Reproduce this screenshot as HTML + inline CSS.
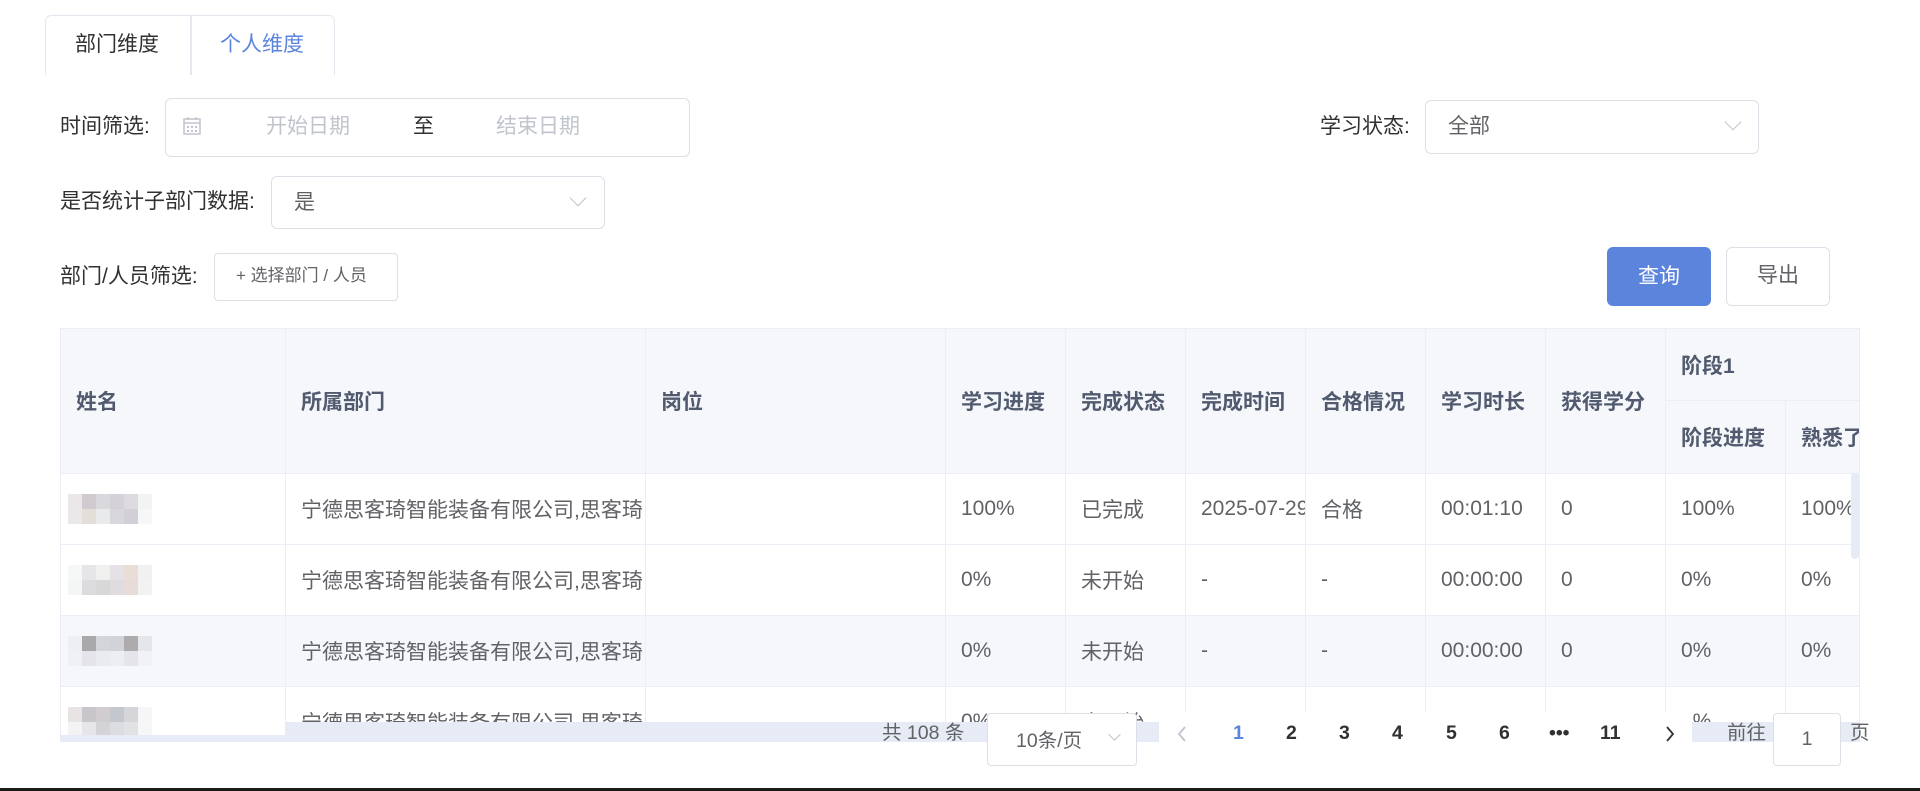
<!DOCTYPE html>
<html><head><meta charset="utf-8"><style>
*{box-sizing:border-box;margin:0;padding:0}
body{width:1920px;height:791px;background:#fff;position:relative;overflow:hidden;font-family:"Liberation Sans","Noto Sans CJK SC",sans-serif;font-size:21px;color:#606266}
.a{position:absolute}
.lbl{color:#303133;font-size:21px;line-height:30px}
.box{position:absolute;border:1.5px solid #dcdfe6;border-radius:6px;background:#fff}
.chev{position:absolute;width:12px;height:12px;border-right:1.5px solid #c0c4cc;border-bottom:1.5px solid #c0c4cc;transform:rotate(45deg)}
table{border-collapse:collapse;table-layout:fixed;position:absolute;left:0;top:0}
td,th{border:1px solid #ebeef5;padding:0 15px;text-align:left;white-space:nowrap;overflow:hidden;font-size:21px}
th{background:#f5f7fa;color:#515a6e;font-weight:bold}
td{height:71px;color:#606266}
tr.st td{background:#f5f7fa}
.nm{display:grid;grid-template-columns:repeat(6,14px);grid-template-rows:repeat(2,15px);width:84px;margin-left:-8px}
.nm i{display:block}
.pg{position:absolute;top:718px;font-size:19.5px;font-weight:bold;color:#303133;line-height:30px}
</style></head><body>
<div class="a" style="left:45px;top:15px;width:290px;height:60px;border:1.5px solid #e4e7ed;border-bottom:none;border-radius:6px 6px 0 0"></div>
<div class="a" style="left:190px;top:15px;width:1.5px;height:60px;background:#e4e7ed"></div>
<div class="a lbl" style="left:75px;top:30px">部门维度</div>
<div class="a lbl" style="left:220px;top:30px;color:#5b84dc">个人维度</div>

<div class="a lbl" style="left:60px;top:112px">时间筛选:</div>
<div class="box" style="left:165px;top:98px;width:525px;height:59px"></div>
<svg class="a" style="left:182px;top:116px" width="20" height="20" viewBox="0 0 20 20"><rect x="2" y="3" width="16" height="15" fill="none" stroke="#c0c4cc" stroke-width="1.5"/><line x1="2" y1="7" x2="18" y2="7" stroke="#c0c4cc" stroke-width="1.5"/><line x1="6" y1="1" x2="6" y2="4" stroke="#c0c4cc" stroke-width="1.5"/><line x1="14" y1="1" x2="14" y2="4" stroke="#c0c4cc" stroke-width="1.5"/><g fill="#c0c4cc"><rect x="5" y="10" width="2" height="2"/><rect x="9" y="10" width="2" height="2"/><rect x="13" y="10" width="2" height="2"/><rect x="5" y="14" width="2" height="2"/><rect x="9" y="14" width="2" height="2"/><rect x="13" y="14" width="2" height="2"/></g></svg>
<div class="a" style="left:266px;top:112px;color:#c0c4cc;line-height:30px">开始日期</div>
<div class="a" style="left:413px;top:112px;color:#303133;line-height:30px">至</div>
<div class="a" style="left:496px;top:112px;color:#c0c4cc;line-height:30px">结束日期</div>

<div class="a lbl" style="left:1320px;top:112px">学习状态:</div>
<div class="box" style="left:1425px;top:100px;width:334px;height:54px"></div>
<div class="a" style="left:1448px;top:112px;color:#606266;line-height:30px">全部</div>
<div class="chev" style="left:1727px;top:116px"></div>

<div class="a lbl" style="left:60px;top:187px">是否统计子部门数据:</div>
<div class="box" style="left:271px;top:176px;width:334px;height:53px"></div>
<div class="a" style="left:294px;top:188px;color:#606266;line-height:30px">是</div>
<div class="chev" style="left:572px;top:192px"></div>

<div class="a lbl" style="left:60px;top:262px">部门/人员筛选:</div>
<div class="box" style="left:214px;top:253px;width:184px;height:48px;border-radius:4px"></div>
<div class="a" style="left:236px;top:263px;font-size:17px;color:#606266;line-height:26px">+ 选择部门 / 人员</div>
<div class="a" style="left:1607px;top:247px;width:104px;height:59px;background:#5b84dc;border-radius:6px;color:#fff;text-align:center;line-height:59px">查询</div>
<div class="box" style="left:1726px;top:247px;width:104px;height:59px;text-align:center;line-height:56px;color:#606266">导出</div>

<div class="a" style="left:60px;top:328px;width:1800px;height:414px;overflow:hidden;border-right:1px solid #ebeef5">
<table style="width:1875px">
<colgroup><col style="width:225px"><col style="width:360px"><col style="width:300px"><col style="width:120px"><col style="width:120px"><col style="width:120px"><col style="width:120px"><col style="width:120px"><col style="width:120px"><col style="width:120px"><col style="width:150px"></colgroup>
<tr style="height:72px"><th rowspan="2">姓名</th><th rowspan="2">所属部门</th><th rowspan="2">岗位</th><th rowspan="2">学习进度</th><th rowspan="2">完成状态</th><th rowspan="2">完成时间</th><th rowspan="2">合格情况</th><th rowspan="2">学习时长</th><th rowspan="2">获得学分</th><th colspan="2">阶段1</th></tr>
<tr style="height:73px"><th>阶段进度</th><th>熟悉了</th></tr>
<tr><td><div class="nm"><i style="background:#ebe6e8"></i><i style="background:#cfcbd0"></i><i style="background:#d8d8dd"></i><i style="background:#d4d2d8"></i><i style="background:#dedbe0"></i><i style="background:#f2f4f4"></i><i style="background:#ebe8ea"></i><i style="background:#e2ded8"></i><i style="background:#e8eaec"></i><i style="background:#d8d7dc"></i><i style="background:#d2d0d6"></i><i style="background:#f6f7f7"></i></div></td><td>宁德思客琦智能装备有限公司,思客琦</td><td></td><td>100%</td><td>已完成</td><td style="padding-right:0">2025-07-29</td><td>合格</td><td>00:01:10</td><td>0</td><td>100%</td><td>100%</td></tr>
<tr><td><div class="nm"><i style="background:#f6f7f7"></i><i style="background:#e6e5e8"></i><i style="background:#f0f0ef"></i><i style="background:#e4e2e5"></i><i style="background:#e9ddd8"></i><i style="background:#f1f1f2"></i><i style="background:#f4f5f5"></i><i style="background:#dcdbde"></i><i style="background:#d8d8d8"></i><i style="background:#dedcde"></i><i style="background:#e7ddd8"></i><i style="background:#f2f2f3"></i></div></td><td>宁德思客琦智能装备有限公司,思客琦</td><td></td><td>0%</td><td>未开始</td><td>-</td><td>-</td><td>00:00:00</td><td>0</td><td>0%</td><td>0%</td></tr>
<tr class="st"><td><div class="nm"><i style="background:#eeeff3"></i><i style="background:#a9a8aa"></i><i style="background:#d4d5da"></i><i style="background:#d2d3d9"></i><i style="background:#aeabad"></i><i style="background:#e4e6ea"></i><i style="background:#f0f1f4"></i><i style="background:#e4e4ea"></i><i style="background:#eaebef"></i><i style="background:#eceef2"></i><i style="background:#e4e4ea"></i><i style="background:#f0f2f5"></i></div></td><td>宁德思客琦智能装备有限公司,思客琦</td><td></td><td>0%</td><td>未开始</td><td>-</td><td>-</td><td>00:00:00</td><td>0</td><td>0%</td><td>0%</td></tr>
<tr><td><div class="nm"><i style="background:#e8e4e4"></i><i style="background:#c8c6cb"></i><i style="background:#d0ccd0"></i><i style="background:#c4c7ce"></i><i style="background:#d6d5d9"></i><i style="background:#f5f6f7"></i><i style="background:#f3f3f4"></i><i style="background:#e6e6ea"></i><i style="background:#d4d4d8"></i><i style="background:#dcdde0"></i><i style="background:#e2e2e5"></i><i style="background:#f6f7f8"></i></div></td><td>宁德思客琦智能装备有限公司,思客琦</td><td></td><td>0%</td><td>未开始</td><td>-</td><td>-</td><td>00:00:00</td><td>0</td><td>0%</td><td>0%</td></tr>
</table>
</div>
<div class="a" style="left:285px;top:722px;width:1575px;height:20px;background:#e6ebf5"></div>
<div class="a" style="left:60px;top:735px;width:225px;height:7px;background:#e6ebf5"></div>
<div class="a" style="left:1851px;top:473px;width:8px;height:86px;background:#e6ebf5;border-radius:4px"></div>

<div class="a" style="left:1159px;top:712px;width:533px;height:32px;background:#fff"></div>
<div class="a" style="left:882px;top:718px;line-height:30px;color:#606266;font-size:19.5px">共 108 条</div>
<div class="box" style="left:987px;top:713px;width:150px;height:53px;border-radius:4px"></div>
<div class="a" style="left:1016px;top:726px;line-height:30px;color:#606266;font-size:19.5px">10条/页</div>
<div class="chev" style="left:1110px;top:730px;width:9px;height:9px"></div>
<svg class="a" style="left:1176px;top:724px" width="12" height="20" viewBox="0 0 12 20"><path d="M9 3 L3 10 L9 17" fill="none" stroke="#c0c4cc" stroke-width="1.8"/></svg>
<div class="pg" style="left:1233px;color:#5b84dc">1</div>
<div class="pg" style="left:1286px">2</div>
<div class="pg" style="left:1339px">3</div>
<div class="pg" style="left:1392px">4</div>
<div class="pg" style="left:1446px">5</div>
<div class="pg" style="left:1499px">6</div>
<div class="pg" style="left:1549px">•••</div>
<div class="pg" style="left:1600px">11</div>
<svg class="a" style="left:1664px;top:724px" width="12" height="20" viewBox="0 0 12 20"><path d="M3 3 L9 10 L3 17" fill="none" stroke="#303133" stroke-width="1.8"/></svg>
<div class="a" style="left:1727px;top:718px;line-height:30px;color:#606266;font-size:19.5px">前往</div>
<div class="box" style="left:1773px;top:713px;width:68px;height:53px;border-radius:4px;text-align:center;line-height:50px;font-size:19.5px">1</div>
<div class="a" style="left:1850px;top:718px;line-height:30px;color:#606266;font-size:19.5px">页</div>

<div class="a" style="left:0;top:788px;width:1920px;height:3px;background:#1a1a1a"></div>
</body></html>
